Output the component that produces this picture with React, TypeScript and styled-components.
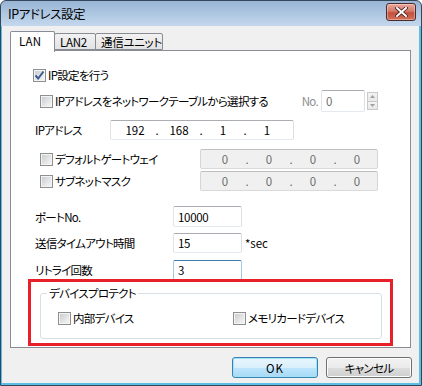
import React from "react";
import styled, { createGlobalStyle } from "styled-components";

const GlobalStyle = createGlobalStyle`
  html, body {
    margin: 0;
    padding: 0;
    background: #ffffff;
  }
  body {
    font-family: "Noto Sans CJK JP", "Noto Sans", sans-serif;
    font-size: 11.5px;
    letter-spacing: -0.7px;
    font-feature-settings: "palt";
    color: #000;
  }
  * {
    box-sizing: border-box;
  }
`;

const CheckBox = ({ checked }: { checked?: boolean }) => (
  <Box>
    {checked && (
      <svg width="11" height="11" viewBox="0 0 11 11">
        <polyline
          points="1.5,5.5 4.2,8.5 9.5,1.5"
          fill="none"
          stroke="#3b5a96"
          strokeWidth="2"
        />
      </svg>
    )}
  </Box>
);

const IpAddress = ({ values, disabled }: { values: string[]; disabled?: boolean }) => (
  <IpBox $disabled={disabled}>
    {values.map((v, i) => (
      <React.Fragment key={i}>
        {i > 0 && <IpDot>.</IpDot>}
        <Octet>{v}</Octet>
      </React.Fragment>
    ))}
  </IpBox>
);

const App = () => {
  return (
    <>
      <GlobalStyle />
      <Window>
        <TitleBar>
          <Caption>IPアドレス設定</Caption>
          <CloseButton>
            <svg width="13" height="10" viewBox="0 0 13 10">
              <path
                d="M2 1 L11 9 M11 1 L2 9"
                stroke="#4a2020"
                strokeWidth="3.6"
                strokeLinecap="square"
              />
              <path
                d="M2 1 L11 9 M11 1 L2 9"
                stroke="#ffffff"
                strokeWidth="2"
                strokeLinecap="square"
              />
            </svg>
          </CloseButton>
        </TitleBar>

        <Client>
          <TabBar>
            <Tab $active $w={45}>LAN</Tab>
            <Tab $w={42}>LAN2</Tab>
            <Tab $w={68}>通信ユニット</Tab>
          </TabBar>

          <Panel>
            <Row $top={14} $h={20} $indent={22}>
              <CheckBox checked />
              <CheckLabel>IP設定を行う</CheckLabel>
            </Row>

            <Row $top={5} $h={22} $indent={29}>
              <CheckBox />
              <CheckLabel>IPアドレスをネットワークテーブルから選択する</CheckLabel>
              <Spacer />
              <DimLabel>No.</DimLabel>
              <TextBox $w={44} $disabled readOnly value="0" />
              <Spinner>
                <SpinButton>
                  <svg width="5" height="3" viewBox="0 0 5 3">
                    <path d="M0 3 L2.5 0 L5 3 Z" fill="#a0a0a0" />
                  </svg>
                </SpinButton>
                <SpinButton>
                  <svg width="5" height="3" viewBox="0 0 5 3">
                    <path d="M0 0 L2.5 3 L5 0 Z" fill="#a0a0a0" />
                  </svg>
                </SpinButton>
              </Spinner>
            </Row>

            <Row $top={8} $h={20} $indent={24}>
              <FieldLabel $w={75}>IPアドレス</FieldLabel>
              <IpAddress values={["192", "168", "1", "1"]} />
            </Row>

            <Row $top={9} $h={20} $indent={29}>
              <FieldLabel $w={160}>
                <CheckBox />
                <CheckLabel>デフォルトゲートウェイ</CheckLabel>
              </FieldLabel>
              <IpAddress values={["0", "0", "0", "0"]} disabled />
            </Row>

            <Row $top={2} $h={20} $indent={29}>
              <FieldLabel $w={160}>
                <CheckBox />
                <CheckLabel>サブネットマスク</CheckLabel>
              </FieldLabel>
              <IpAddress values={["0", "0", "0", "0"]} disabled />
            </Row>

            <Row $top={15} $h={21} $indent={24}>
              <FieldLabel $w={138}>ポートNo.</FieldLabel>
              <TextBox $w={69} readOnly value="10000" />
            </Row>

            <Row $top={6} $h={20} $indent={24}>
              <FieldLabel $w={138}>送信タイムアウト時間</FieldLabel>
              <TextBox $w={69} readOnly value="15" />
              <Unit>*sec</Unit>
            </Row>

            <Row $top={7} $h={20} $indent={24}>
              <FieldLabel $w={138}>リトライ回数</FieldLabel>
              <TextBox $w={69} $focused readOnly value="3" />
            </Row>

            <Highlight>
              <GroupBox>
                <Legend>デバイスプロテクト</Legend>
                <Row $top={10} $h={16} $indent={17}>
                  <FieldLabel $w={175}>
                    <CheckBox />
                    <CheckLabel>内部デバイス</CheckLabel>
                  </FieldLabel>
                  <CheckBox />
                  <CheckLabel>メモリカードデバイス</CheckLabel>
                </Row>
              </GroupBox>
            </Highlight>
          </Panel>

          <ButtonRow>
            <DialogButton $default>OK</DialogButton>
            <DialogButton>キャンセル</DialogButton>
          </ButtonRow>
        </Client>
      </Window>
    </>
  );
};

export default App;

// ======== STYLED COMPONENTS ========

const Window = styled.div`
  width: 422px;
  height: 386px;
  display: flex;
  flex-direction: column;
  border: 1px solid #34465a;
  border-radius: 6px 6px 0 0;
  padding: 0 2px 2px 1px;
  overflow: hidden;
  background: linear-gradient(#98b5d5 0, #c4d8ed 25px, #5cbde6 25px, #5cbde6 100%);
`;

const TitleBar = styled.div`
  height: 25px;
  display: flex;
  align-items: center;
  justify-content: space-between;
  padding: 0 3px 0 6px;
`;

const Caption = styled.span`
  font-size: 12.5px;
  letter-spacing: -0.4px;
  color: #000;
  padding-bottom: 1px;
`;

const CloseButton = styled.div`
  width: 30px;
  height: 18px;
  margin-top: -3px;
  border: 1px solid #4c2a2a;
  border-radius: 3px;
  display: flex;
  align-items: center;
  justify-content: center;
  background: linear-gradient(#e9a99c 0%, #d27a6a 45%, #c4503c 55%, #d2705a 100%);
  box-shadow: inset 0 0 0 1px rgba(255, 255, 255, 0.35);
`;

const Client = styled.div`
  flex: 1;
  display: flex;
  flex-direction: column;
  background: #f0f0f0;
  padding: 5px 7px 0 8px;
`;

const TabBar = styled.div`
  display: flex;
  align-items: flex-end;
  height: 19px;
  position: relative;
  z-index: 1;
`;

const Tab = styled.div<{ $active?: boolean; $w: number }>`
  width: ${(p) => p.$w}px;
  height: ${(p) => (p.$active ? 21 : 17)}px;
  margin-bottom: ${(p) => (p.$active ? -2 : 0)}px;
  margin-left: ${(p) => (p.$active ? 0 : -1)}px;
  border: 1px solid #898c95;
  border-bottom: ${(p) => (p.$active ? "none" : "1px solid #898c95")};
  border-radius: 2px 2px 0 0;
  background: ${(p) => (p.$active ? "#ffffff" : "linear-gradient(#f2f2f2, #e3e3e3)")};
  display: flex;
  align-items: center;
  padding-left: ${(p) => (p.$active ? 8 : 5)}px;
  padding-bottom: ${(p) => (p.$active ? 2 : 0)}px;
  letter-spacing: ${(p) => (p.$active ? 0.3 : -0.3)}px;
  color: #000;
  white-space: nowrap;

  &:first-child {
    margin-left: 0;
  }
`;

const Panel = styled.div`
  width: 401px;
  height: 298px;
  border: 1px solid #898c95;
  background: #ffffff;
  display: flex;
  flex-direction: column;
`;

const Row = styled.div<{ $top: number; $h: number; $indent: number }>`
  display: flex;
  align-items: center;
  margin-top: ${(p) => p.$top}px;
  height: ${(p) => p.$h}px;
  padding-left: ${(p) => p.$indent}px;
  padding-right: 32px;
  flex-shrink: 0;
`;

const Box = styled.span`
  width: 13px;
  height: 13px;
  flex-shrink: 0;
  border: 1px solid #8e8f8f;
  background: linear-gradient(135deg, #c6c8cc 0%, #e6e7e8 60%, #f6f6f6 100%);
  box-shadow: inset 0 0 0 1px #f4f4f4;
  display: inline-flex;
  align-items: center;
  justify-content: center;
  position: relative;

  svg {
    position: absolute;
    left: 0;
    top: 0;
  }
`;

const CheckLabel = styled.span`
  margin-left: 2px;
  white-space: nowrap;
  line-height: 14px;
`;

const Spacer = styled.div`
  flex: 1;
`;

const DimLabel = styled.span`
  color: #8d8d8d;
  margin-right: 3px;
`;

const FieldLabel = styled.div<{ $w: number }>`
  width: ${(p) => p.$w}px;
  flex-shrink: 0;
  display: flex;
  align-items: center;
  white-space: nowrap;
`;

const TextBox = styled.input<{ $w: number; $disabled?: boolean; $focused?: boolean }>`
  width: ${(p) => p.$w}px;
  height: 100%;
  margin: 0;
  padding: 0 0 0 4px;
  font: inherit;
  letter-spacing: -0.3px;
  color: ${(p) => (p.$disabled ? "#6d6d6d" : "#000")};
  background: #ffffff;
  border: 1px solid;
  border-radius: 2px;
  border-color: ${(p) =>
    p.$focused
      ? "#3d7bad #a4c9e3 #b7d9ed #a4c9e3"
      : "#abadb3 #dbdfe6 #e3e9ef #e2e3ea"};
  outline: none;
`;

const Spinner = styled.div`
  margin-left: 2px;
  display: flex;
  flex-direction: column;
  width: 11px;
  height: 18px;
`;

const SpinButton = styled.div`
  flex: 1;
  border: 1px solid #c9c9c9;
  background: linear-gradient(#f4f4f4, #e8e8e8);
  display: flex;
  align-items: center;
  justify-content: center;

  & + & {
    border-top: none;
  }
`;

const IpBox = styled.div<{ $disabled?: boolean }>`
  width: ${(p) => (p.$disabled ? 182 : 184)}px;
  height: 100%;
  display: flex;
  align-items: center;
  padding-left: 4px;
  border: 1px solid;
  border-radius: 2px;
  border-color: ${(p) =>
    p.$disabled ? "#bfbfbf #d5d5d5 #d9d9d9 #d5d5d5" : "#abadb3 #dbdfe6 #e3e9ef #e2e3ea"};
  background: ${(p) => (p.$disabled ? "#f0f0f0" : "#ffffff")};
  color: ${(p) => (p.$disabled ? "#6d6d6d" : "#000")};
  letter-spacing: 0;
`;

const Octet = styled.span`
  width: 40px;
  text-align: center;
`;

const IpDot = styled.span`
  width: 4px;
  text-align: center;
`;

const Unit = styled.span`
  margin-left: 3px;
  letter-spacing: 0;
`;

const Highlight = styled.div`
  position: relative;
  margin: -1px 0 0 17px;
  width: 365px;
  height: 67px;
  border: 3px solid #e8202a;
  padding: 4px 0 0 9px;
`;

const GroupBox = styled.fieldset`
  width: 342px;
  height: 53px;
  margin: 0;
  padding: 0;
  border: 1px solid #d5dfe5;
  border-radius: 3px;
`;

const Legend = styled.legend`
  margin-left: 6px;
  padding: 0 2px;
  line-height: 14px;
`;

const ButtonRow = styled.div`
  display: flex;
  justify-content: flex-end;
  gap: 8px;
  margin-top: 9px;
`;

const DialogButton = styled.button<{ $default?: boolean }>`
  width: 86px;
  height: 21px;
  margin: 0;
  padding: 0;
  font: inherit;
  letter-spacing: ${(p) => (p.$default ? 1 : -0.7)}px;
  color: #000;
  border: 1px solid ${(p) => (p.$default ? "#3c7fb1" : "#707070")};
  border-radius: 3px;
  background: ${(p) =>
    p.$default
      ? "linear-gradient(#eaf6fd 0%, #d9f0fc 50%, #bee6fd 51%, #a7d9f5 100%)"
      : "linear-gradient(#f2f2f2 0%, #ebebeb 50%, #dddddd 51%, #cfcfcf 100%)"};
  box-shadow: inset 0 0 0 1px ${(p) => (p.$default ? "#9ee4f9" : "#fcfcfc")};
  cursor: pointer;
`;
